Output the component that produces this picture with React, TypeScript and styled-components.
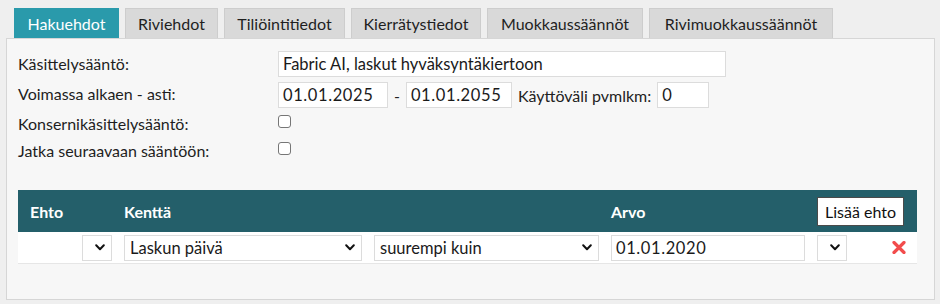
import React from "react";
import styled, { createGlobalStyle } from "styled-components";

const Global = createGlobalStyle`
  html, body { margin: 0; padding: 0; background: #efefef; }
  body { font-family: Lato, "Open Sans", Arial, sans-serif; color: #222; }
  * { box-sizing: border-box; }
`;

const Page = styled.div`
  width: 940px;
  height: 304px;
  padding: 8px 5px 0 6px;
`;

const TabBar = styled.div`
  display: flex;
  gap: 6px;
  padding-left: 8px;
`;

const Tab = styled.div<{ $active?: boolean; $w: number }>`
  width: ${(p) => p.$w}px;
  height: 30px;
  display: flex;
  align-items: center;
  justify-content: center;
  font-size: 16px;
  background: ${(p) => (p.$active ? "#2a9aab" : "#d9d9d9")};
  color: ${(p) => (p.$active ? "#ffffff" : "#1f1f1f")};
  border: 1px solid ${(p) => (p.$active ? "#2a9aab" : "#cdcdcd")};
  border-bottom: none;
`;

const Panel = styled.div`
  width: 929px;
  height: 262px;
  background: #f7f7f7;
  border: 1px solid #d6d6d6;
  padding: 12px 16px 0 11px;
`;

const FormGrid = styled.div`
  display: grid;
  grid-template-columns: 260px 1fr;
  grid-template-rows: 31px 31px 27px 27px;
  align-items: start;
`;

const Label = styled.div<{ $pt?: number }>`
  font-size: 16px;
  color: #1e1e1e;
  line-height: 18px;
  padding-top: ${(p) => p.$pt ?? 0}px;
`;

const Line = styled.div`
  display: flex;
  align-items: center;
  gap: 6px;
  font-size: 16px;
`;

const TextInput = styled.div<{ $w: number; $digits?: boolean }>`
  width: ${(p) => p.$w}px;
  height: 26px;
  background: #fff;
  border: 1px solid #dcdcdc;
  display: flex;
  align-items: center;
  padding-left: 4px;
  font-size: 16.5px;
  letter-spacing: ${(p) => (p.$digits ? "0.6px" : "0")};
  color: #1a1a1a;
  white-space: nowrap;
  overflow: hidden;
`;

const Dash = styled.span`
  font-size: 16px;
`;

const CheckCell = styled.div`
  padding-top: 2px;
`;

const Check = styled.div`
  width: 13px;
  height: 13px;
  border: 1px solid #767676;
  border-radius: 3px;
  background: #fff;
`;

const Table = styled.div`
  margin-top: 23px;
  width: 899px;
`;

const Head = styled.div`
  height: 42px;
  background: #245f6a;
  display: grid;
  grid-template-columns: 106px 487px 206px 100px;
  align-items: center;
  color: #fff;
  font-weight: 700;
  font-size: 16px;
`;

const HeadCell = styled.div<{ $pl?: number }>`
  padding-left: ${(p) => p.$pl ?? 0}px;
`;

const AddButton = styled.div`
  width: 87px;
  height: 29px;
  background: #fff;
  border: 1px solid #4a4a4a;
  color: #111;
  font-weight: 400;
  font-size: 16px;
  display: flex;
  align-items: center;
  justify-content: center;
`;

const Row = styled.div`
  height: 32px;
  background: #fff;
  border-bottom: 1px solid #e6e6e6;
  display: flex;
  align-items: center;
  padding-left: 64px;
`;

const SelectBox = styled.div<{ $w: number; $ml: number }>`
  width: ${(p) => p.$w}px;
  margin-left: ${(p) => p.$ml}px;
  height: 26px;
  background: #fff;
  border: 1px solid #dcdcdc;
  display: flex;
  align-items: center;
  justify-content: space-between;
  padding: 0 6px 0 5px;
  font-size: 16.5px;
  color: #1a1a1a;
`;

const Field = styled(TextInput)<{ $ml: number }>`
  margin-left: ${(p) => p.$ml}px;
`;

const DeleteIcon = styled.div`
  margin-left: 45px;
  display: flex;
  align-items: center;
`;

const Chevron = () => (
  <svg width="10" height="7" viewBox="0 0 10 7">
    <path d="M1.2 1.3 L5 5.2 L8.8 1.3" fill="none" stroke="#111" strokeWidth="2" strokeLinecap="round" strokeLinejoin="round" />
  </svg>
);

const Select = ({ w, ml, text }: { w: number; ml: number; text?: string }) => (
  <SelectBox $w={w} $ml={ml}>
    <span>{text ?? ""}</span>
    <Chevron />
  </SelectBox>
);

const tabs: [string, number][] = [
  ["Hakuehdot", 105],
  ["Riviehdot", 93],
  ["Tiliöintitiedot", 121],
  ["Kierrätystiedot", 130],
  ["Muokkaussäännöt", 156],
  ["Rivimuokkaussäännöt", 184],
];

export default function App() {
  return (
    <Page>
      <Global />
      <TabBar>
        {tabs.map(([t, w], i) => (
          <Tab key={t} $active={i === 0} $w={w}>
            {t}
          </Tab>
        ))}
      </TabBar>
      <Panel>
        <FormGrid>
          <Label $pt={4}>Käsittelysääntö:</Label>
          <TextInput $w={448}>Fabric AI, laskut hyväksyntäkiertoon</TextInput>
          <Label $pt={3}>Voimassa alkaen - asti:</Label>
          <Line>
            <TextInput $w={110} $digits>01.01.2025</TextInput>
            <Dash>-</Dash>
            <TextInput $w={106} $digits>01.01.2055</TextInput>
            <span>Käyttöväli pvmlkm:</span>
            <TextInput $w={52}>0</TextInput>
          </Line>
          <Label $pt={2}>Konsernikäsittelysääntö:</Label>
          <CheckCell>
            <Check />
          </CheckCell>
          <Label $pt={2}>Jatka seuraavaan sääntöön:</Label>
          <CheckCell>
            <Check />
          </CheckCell>
        </FormGrid>
        <Table>
          <Head>
            <HeadCell $pl={12}>Ehto</HeadCell>
            <HeadCell>Kenttä</HeadCell>
            <HeadCell>Arvo</HeadCell>
            <HeadCell>
              <AddButton>Lisää ehto</AddButton>
            </HeadCell>
          </Head>
          <Row>
            <Select w={30} ml={0} />
            <Select w={238} ml={12} text="Laskun päivä" />
            <Select w={225} ml={12} text="suurempi kuin" />
            <Field $w={194} $ml={12} $digits>01.01.2020</Field>
            <Select w={30} ml={12} />
            <DeleteIcon>
              <svg width="14" height="13" viewBox="0 0 14 13">
                <path d="M2 1.5 L12 11.5 M12 1.5 L2 11.5" stroke="#f24c4c" strokeWidth="3.2" strokeLinecap="round" />
              </svg>
            </DeleteIcon>
          </Row>
        </Table>
      </Panel>
    </Page>
  );
}
